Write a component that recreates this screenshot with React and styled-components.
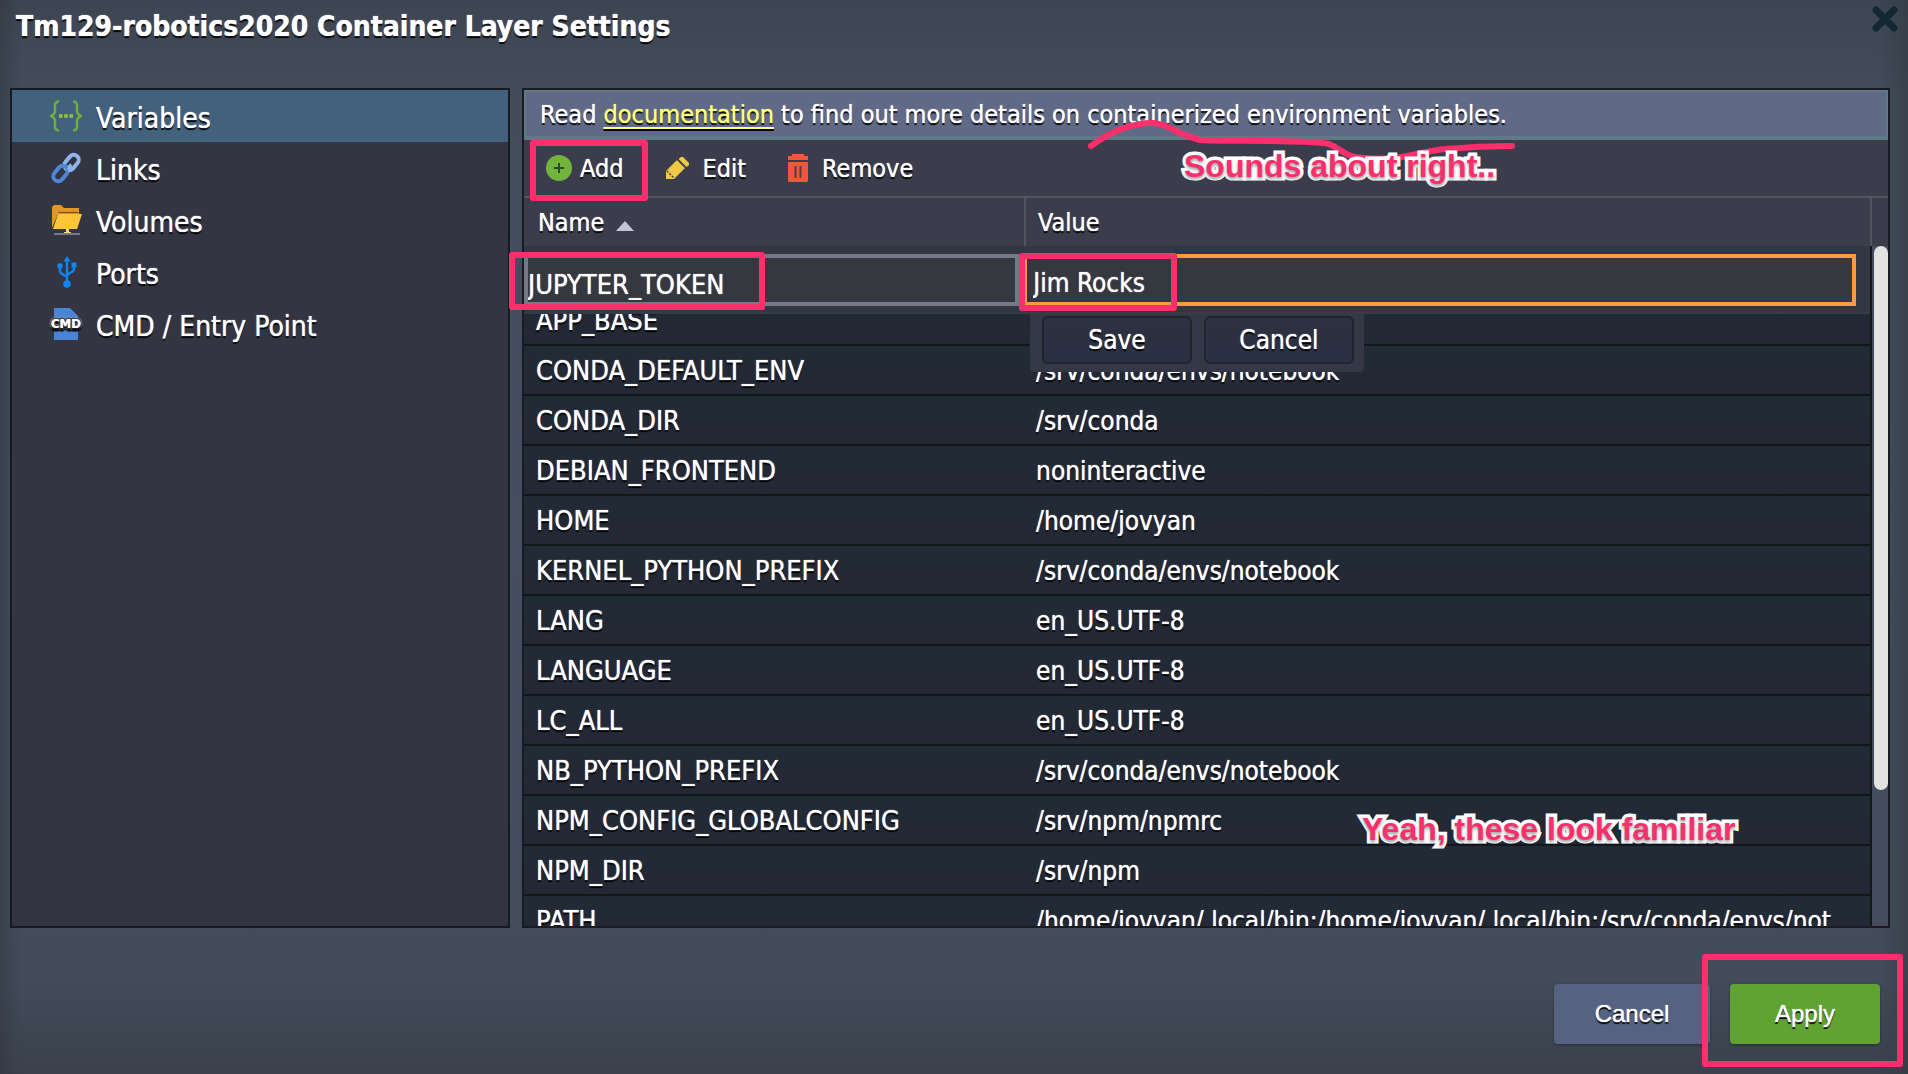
import React from 'react';
import styled, { createGlobalStyle } from 'styled-components';

const UI_FONT = '"DejaVu Sans Condensed", "DejaVu Sans", sans-serif';
const ALT_FONT = '"Liberation Sans", Arial, sans-serif';
const PINK = '#fb2f6c';

const GlobalStyle = createGlobalStyle`
  *, *::before, *::after { box-sizing: border-box; }
  body { margin: 0; background: #3d4552; }
  button, input { font: inherit; color: inherit; }
`;

const Dialog = styled.div`
  height: 100vh;
  display: flex;
  flex-direction: column;
  overflow: hidden;
  font-family: ${UI_FONT};
  font-size: 26px;
  color: #fff;
  text-shadow: 0 0 1px #fff, 0 2px 1px #000;
  background:
    linear-gradient(to right, rgba(50, 56, 66, 0.6), transparent 20px, transparent calc(100% - 30px), rgba(50, 58, 66, 0.6)),
    linear-gradient(to bottom, #3d4552 0, #434c5b 90px, #454e60 50%, #434c5b calc(100% - 100px), #3a414c 100%);
`;

const TitleBar = styled.header`
  flex: none;
  height: 88px;
  padding: 0 10px 0 16px;
  display: flex;
  justify-content: space-between;
  align-items: flex-start;
`;

const Title = styled.h1`
  margin: 0;
  font-size: 28px;
  line-height: 54px;
  font-weight: bold;
`;

const CloseButton = styled.button`
  display: flex;
  padding: 6px 0;
  border: 0;
  background: none;
  color: #122833;
`;

const Main = styled.main`
  flex: 1;
  min-height: 0;
  display: flex;
  gap: 12px;
  padding: 0 18px 0 10px;
`;

const Sidebar = styled.nav`
  flex: none;
  width: 500px;
  border: 2px solid #181a22;
  background: #333642;
`;

const SideItem = styled.a`
  display: flex;
  align-items: center;
  gap: 14px;
  height: 52px;
  padding-left: 38px;
  font-size: 28px;
  color: #fff;
  text-decoration: none;
  background: ${(p) => (p.$active ? '#41617c' : 'transparent')};

  span { padding-top: 4px; }
`;

const Panel = styled.section`
  flex: 1;
  min-width: 0;
  display: flex;
  flex-direction: column;
  border: 2px solid #181b22;
  background: #3b3d4c;
`;

const Notice = styled.p`
  position: relative;
  flex: none;
  margin: 0;
  height: 50px;
  line-height: 46px;
  padding-left: 14px;
  font-size: 25px;
  white-space: nowrap;
  border: solid #5f7a86;
  border-width: 2px 2px 4px;
  background: #606a87;

  a {
    color: #ffff80;
    text-shadow: 0 0 1px #ffff80, 0 2px 1px #000;
    text-underline-offset: 4px;
    text-decoration-thickness: 2px;
  }
`;

const Toolbar = styled.div`
  flex: none;
  display: flex;
  height: 58px;
  padding-left: 12px;
  gap: 22px;
  border-bottom: 2px solid #51535f;
`;

const ToolButton = styled.button`
  position: relative;
  display: flex;
  align-items: center;
  gap: ${(p) => p.$gap || 14}px;
  padding: 0 10px;
  border: 0;
  background: none;
  font-size: 25px;
  text-shadow: inherit;
`;

const Grid = styled.div`
  position: relative;
  flex: 1;
  min-height: 0;
  display: flex;
`;

const TableClip = styled.div`
  flex: 1;
  min-width: 0;
  overflow: hidden;
  background: #222a35;
`;

const Table = styled.table`
  width: 100%;
  table-layout: fixed;
  border-collapse: separate;
  border-spacing: 0;
  white-space: nowrap;
`;

const HeadCell = styled.th`
  width: ${(p) => p.$width || 'auto'};
  height: 48px;
  padding: 0 ${(p) => (p.$divided ? 12 : 14)}px;
  text-align: left;
  font-size: 25px;
  font-weight: normal;
  background: #3b3d4c;
  border: solid #51535f;
  border-width: ${(p) => (p.$divided ? '0 2px' : '0')};

  svg { margin-left: 12px; }
`;

const Cell = styled.td`
  height: 50px;
  padding: 2px 12px 0;
  overflow: hidden;
  font-size: ${(p) => (p.$name ? 27 : 26)}px;
  line-height: 46px;
  border: solid #12171b;
  border-width: 0 ${(p) => (p.$name ? 0 : 2)}px 2px 0;
  background: linear-gradient(#212b35, #232835);
`;

const ScrollTrack = styled.div`
  flex: none;
  width: 16px;
  margin-top: 48px;
  padding-left: 2px;
  background: #454c5e;
`;

const ScrollThumb = styled.div`
  height: 80%;
  border-radius: 7px;
  background: #e2e2e2;
`;

const RowEditor = styled.form`
  position: absolute;
  top: 48px;
  left: 0;
  right: 18px;
  height: 68px;
  padding: 8px 0;
  display: grid;
  grid-template-columns: 37.1% 1fr;
  background: #333743;
  border-bottom: 2px solid #363b48;
`;

const Field = styled.div`
  position: relative;
  height: 52px;
  margin-right: ${(p) => p.$end}px;
`;

const Input = styled.input`
  width: 100%;
  height: 52px;
  padding: ${(p) => (p.$focus ? '6px 0 0 6px' : '8px 0 0')};
  font-size: ${(p) => (p.$focus ? 26 : 27)}px;
  text-shadow: 0 0 1px #fff;
  border: 4px solid ${(p) => (p.$focus ? '#fb9a3e' : '#747987')};
  border-radius: 0;
  outline: 0;
  background: #36383f;
`;

const EditorActions = styled.div`
  position: absolute;
  top: 68px;
  left: 506px;
  display: flex;
  gap: 12px;
  padding: 2px 10px 8px 12px;
  background: #343846;
  border-radius: 0 0 4px 4px;
`;

const EditorButton = styled.button`
  width: 150px;
  height: 48px;
  padding: 0;
  border: 2px solid #20242f;
  border-radius: 6px;
  background: linear-gradient(#2d3142, #2a3142);
  text-shadow: inherit;
`;

const Footer = styled.footer`
  flex: none;
  display: flex;
  justify-content: flex-end;
  gap: 20px;
  padding: 56px 28px 30px;
  font-family: ${ALT_FONT};
`;

const FooterButton = styled.button`
  position: relative;
  width: ${(p) => (p.$primary ? 150 : 156)}px;
  height: 60px;
  border: 0;
  border-radius: 4px;
  font-size: 24px;
  text-shadow: inherit;
  background: ${(p) => (p.$primary ? '#5fa432' : '#556280')};
  box-shadow: 0 1px 3px rgba(0, 0, 0, 0.35);
`;

/* Hand-drawn style marks that lie over the dialog */
const Mark = styled.span`
  position: absolute;
  pointer-events: none;
  z-index: 2;
  top: ${(p) => p.$top}px;
  left: ${(p) => p.$left}px;
  width: ${(p) => p.$w}px;
  height: ${(p) => p.$h}px;
  border: 6px solid ${PINK};
  border-radius: 3px;
`;

const Remark = styled.span`
  position: absolute;
  z-index: 2;
  top: ${(p) => p.$top}px;
  left: ${(p) => p.$left}px;
  font: bold 32px/36px ${ALT_FONT};
  white-space: nowrap;
  color: ${PINK};
  -webkit-text-stroke: 7px #fff;
  paint-order: stroke fill;
  stroke-linejoin: round;
  text-shadow: 0 2px 3px rgba(0, 0, 0, 0.4);
`;

const Squiggle = styled.svg`
  position: absolute;
  z-index: 1;
  top: 22px;
  left: 560px;
`;

const BracesIcon = () => (
  <svg width="32" height="32" viewBox="0 0 32 32" fill="none" stroke="#6fae3c" strokeWidth="2.4" aria-hidden="true">
    <path d="M9 1.5C6 1.5 5 3 5 5.5v5C5 13.500 4 15 .5 16 4 17 5 18.500 5 21.500v5C5 29 6 30.500 9 30.500" />
    <path d="M23 1.500c3 0 4 1.500 4 4v5c0 3 1 4.500 4.500 5.500-3.500 1-4.500 2.500-4.500 5.500v5c0 2.500-1 4-4 4" />
    <path d="M9 16h3.600M14.200 16h3.600M19.400 16H23" stroke="#8cc63f" strokeWidth="3.600" />
  </svg>
);

const ChainIcon = () => (
  <svg width="32" height="32" viewBox="0 0 32 32" fill="none" strokeWidth="4" aria-hidden="true">
    <rect x="-8.500" y="-5" width="17" height="10" rx="5" stroke="#8fb4ea" transform="translate(21.500 10.500) rotate(-50)" />
    <rect x="-8.500" y="-5" width="17" height="10" rx="5" stroke="#4f86d6" transform="translate(10.500 21.500) rotate(-50)" />
    <path d="M18 18.500c2.500-1.500 2.500-4 1-6" stroke="#8fb4ea" />
  </svg>
);

const FolderIcon = () => (
  <svg width="32" height="32" viewBox="0 0 32 32" aria-hidden="true">
    <path d="M2 3l2-2h7l3 3h15v6H8L2 24z" fill="#e2952b" />
    <path d="M8.500 8.500H28" stroke="#7a5424" strokeWidth="1.200" />
    <path d="M8 10h24l-5 15H3z" fill="#fdc53c" />
    <path d="M16 25h3v3h2v2h-7v-2h2z" fill="#fbd98a" />
    <path d="M4 30h26" stroke="#777a82" strokeWidth="2" />
  </svg>
);

const UsbIcon = () => (
  <svg width="32" height="32" viewBox="0 0 32 32" fill="none" stroke="#1583ee" strokeWidth="2.400" aria-hidden="true">
    <path d="M17 5v22M17 21l-5.500-3.500Q10 16.500 10 14.500V10M17 19l5.500-3.500Q24 14.500 24 12.500V8" />
    <path d="M17 0l3.500 5.500h-7z" fill="#1583ee" stroke="none" />
    <circle cx="17" cy="28" r="3.800" fill="#1583ee" stroke="none" />
    <circle cx="10" cy="10" r="2.800" fill="#1583ee" stroke="none" />
    <rect x="21.500" y="6.500" width="5" height="5" fill="#1583ee" stroke="none" />
  </svg>
);

const CmdIcon = () => (
  <svg width="32" height="32" viewBox="0 0 32 32" overflow="visible" aria-hidden="true">
    <path d="M4 0h16l8 8v24H4z" fill="#4a84d4" />
    <text
      x="16" y="20" textAnchor="middle"
      fontFamily="DejaVu Sans Condensed, sans-serif" fontWeight="bold" fontSize="13"
      fill="#fff" stroke="#333642" strokeWidth="3" strokeLinejoin="round" paintOrder="stroke"
    >
      CMD
    </text>
  </svg>
);

const PlusIcon = () => (
  <svg width="26" height="26" viewBox="0 0 26 26" aria-hidden="true">
    <circle cx="13" cy="13" r="13" fill="#72b53c" />
    <path d="M8 13h10M13 8v10" stroke="#2c4a2c" strokeWidth="2" />
  </svg>
);

const PencilIcon = () => (
  <svg width="23" height="22" viewBox="0 0 23 22" aria-hidden="true">
    <path d="M0 22v-8L11 3l8 8L8 22z" fill="#efca45" />
    <path d="M12.500 2L15 0h2l6 6v2l-2.500 2z" fill="#efca45" />
    <path d="M1 14l7 7M11.500 2.500l8 8" stroke="#4c4530" strokeWidth="1.600" strokeDasharray="2 1.500" />
  </svg>
);

const TrashIcon = () => (
  <svg width="20" height="28" viewBox="0 0 20 28" aria-hidden="true">
    <path d="M0 2h4V0h12v2h4v4H0z" fill="#f0583a" />
    <path d="M0 8h20v19l-1 1H1l-1-1z" fill="#f0583a" />
    <path d="M7.500 12v12M12.500 12v12" stroke="#5a3a44" strokeWidth="2" />
  </svg>
);

const SECTIONS = [
  { label: 'Variables', Icon: BracesIcon, active: true },
  { label: 'Links', Icon: ChainIcon },
  { label: 'Volumes', Icon: FolderIcon },
  { label: 'Ports', Icon: UsbIcon },
  { label: 'CMD / Entry Point', Icon: CmdIcon },
];

const VARIABLES = [
  ['APP_BASE', ''],
  ['CONDA_DEFAULT_ENV', '/srv/conda/envs/notebook'],
  ['CONDA_DIR', '/srv/conda'],
  ['DEBIAN_FRONTEND', 'noninteractive'],
  ['HOME', '/home/jovyan'],
  ['KERNEL_PYTHON_PREFIX', '/srv/conda/envs/notebook'],
  ['LANG', 'en_US.UTF-8'],
  ['LANGUAGE', 'en_US.UTF-8'],
  ['LC_ALL', 'en_US.UTF-8'],
  ['NB_PYTHON_PREFIX', '/srv/conda/envs/notebook'],
  ['NPM_CONFIG_GLOBALCONFIG', '/srv/npm/npmrc'],
  ['NPM_DIR', '/srv/npm'],
  ['PATH', '/home/jovyan/.local/bin:/home/jovyan/.local/bin:/srv/conda/envs/not'],
];

export default function App() {
  return (
    <Dialog>
      <GlobalStyle />
      <TitleBar>
        <Title>Tm129-robotics2020 Container Layer Settings</Title>
        <CloseButton aria-label="Close">
          <svg width="26" height="26" viewBox="0 0 26 26" aria-hidden="true">
            <path d="M4 4l18 18M22 4L4 22" stroke="currentColor" strokeWidth="7" strokeLinecap="round" />
          </svg>
        </CloseButton>
      </TitleBar>

      <Main>
        <Sidebar>
          {SECTIONS.map(({ label, Icon, active }) => (
            <SideItem key={label} href="#" $active={active}>
              <Icon />
              <span>{label}</span>
            </SideItem>
          ))}
        </Sidebar>

        <Panel>
          <Notice>
            Read <a href="#">documentation</a> to find out more details on containerized environment variables.
            <Squiggle width="440" height="50" viewBox="0 0 440 50" fill="none" aria-hidden="true">
              <path
                d="M5 32C24 18 44 9 67 9c14 0 24 12 47 17 20 2 110-1 129 4 12 5 15 11 26 13 14 2 28 2 41 1 20-3 34-8 50-9 22-2 44-3 66-3"
                stroke={PINK} strokeWidth="6" strokeLinecap="round"
              />
            </Squiggle>
            <Remark $top={56} $left={658}>Sounds about right..</Remark>
          </Notice>

          <Toolbar>
            <ToolButton $gap={8}>
              <PlusIcon />
              Add
              <Mark $top={0} $left={-6} $w={118} $h={61} />
            </ToolButton>
            <ToolButton>
              <PencilIcon />
              Edit
            </ToolButton>
            <ToolButton>
              <TrashIcon />
              Remove
            </ToolButton>
          </Toolbar>

          <Grid>
            <TableClip>
              <Table>
                <thead>
                  <tr>
                    <HeadCell $width="37.1%">
                      Name
                      <svg width="18" height="10" viewBox="0 0 18 10" aria-hidden="true">
                        <path d="M9 0l9 10H0z" fill="#c3c5d4" />
                      </svg>
                    </HeadCell>
                    <HeadCell $divided>Value</HeadCell>
                  </tr>
                </thead>
                <tbody>
                  <tr>
                    <Cell $name />
                    <Cell />
                  </tr>
                  {VARIABLES.map(([name, value]) => (
                    <tr key={name}>
                      <Cell $name>{name}</Cell>
                      <Cell>{value}</Cell>
                    </tr>
                  ))}
                </tbody>
              </Table>
            </TableClip>
            <ScrollTrack>
              <ScrollThumb />
            </ScrollTrack>

            <RowEditor onSubmit={(e) => e.preventDefault()}>
              <Field $end={4}>
                <Input aria-label="Name" defaultValue="JUPYTER_TOKEN" />
                <Mark $top={-2} $left={-15} $w={256} $h={58} />
              </Field>
              <Field $end={14}>
                <Input aria-label="Value" defaultValue="Jim Rocks" $focus />
                <Mark $top={-1} $left={-4} $w={158} $h={58} />
              </Field>
              <EditorActions>
                <EditorButton type="submit">Save</EditorButton>
                <EditorButton type="button">Cancel</EditorButton>
              </EditorActions>
            </RowEditor>

            <Remark $top={613} $left={838}>Yeah, these look familiar</Remark>
          </Grid>
        </Panel>
      </Main>

      <Footer>
        <FooterButton>Cancel</FooterButton>
        <FooterButton $primary>
          Apply
          <Mark $top={-30} $left={-28} $w={201} $h={113} />
        </FooterButton>
      </Footer>
    </Dialog>
  );
}
